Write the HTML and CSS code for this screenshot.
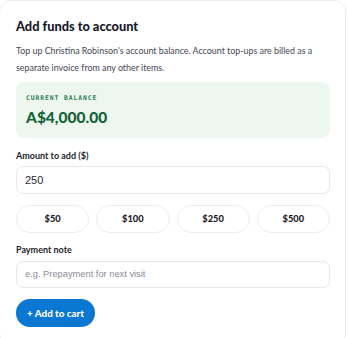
FILE: index.html
```html
<!DOCTYPE html>
<html>
<head>
<meta charset="utf-8">
<link rel="stylesheet" href="styles.css">
</head>
<body>
<div class="card">
  <h2 class="title">Add funds to account</h2>
  <p class="desc">Top up Christina Robinson's account balance. Account top-ups are billed as a separate invoice from any other items.</p>
  <div class="balance">
    <div class="balance-label">CURRENT BALANCE</div>
    <div class="balance-value">A$4,000.00</div>
  </div>
  <label class="label">Amount to add ($)</label>
  <div class="input">250</div>
  <div class="presets">
    <button class="preset">$50</button>
    <button class="preset">$100</button>
    <button class="preset">$250</button>
    <button class="preset">$500</button>
  </div>
  <label class="label label-note">Payment note</label>
  <div class="input placeholder">e.g. Prepayment for next visit</div>
  <button class="primary">+ Add to cart</button>
</div>
</body>
</html>
```

FILE: styles.css
```css
* { box-sizing: border-box; }
html, body { margin: 0; padding: 0; background: #ffffff; }
body { font-family: "Lato", "Open Sans", sans-serif; color: #1d1d2c; }
.card {
  width: 347px;
  margin-left: -1px;
  height: 345px;
  border: 1px solid #ececf2;
  border-radius: 12px;
  padding: 17px 15px 0 16px;
  display: flex;
  flex-direction: column;
}
.title {
  margin: 0;
  font-size: 12.8px;
  font-weight: 900;
  line-height: 16px;
  color: #1a1a2b;
}
.desc {
  margin: 9px 0 0;
  font-size: 8.9px;
  line-height: 16.5px;
  color: #454556;
}
.balance {
  margin-top: 6px;
  background: #edf7f0;
  border-radius: 8px;
  height: 56px;
  padding: 11px 10px 0;
}
.balance-label {
  font-family: "DejaVu Sans Mono", monospace;
  font-size: 6.4px;
  font-weight: 700;
  letter-spacing: 0.9px;
  color: #2d7d55;
  line-height: 10px;
}
.balance-value {
  margin-top: 3px;
  font-size: 15.5px;
  font-weight: 900;
  color: #17633a;
  line-height: 22px;
}
.label {
  display: block;
  margin-top: 12px;
  font-size: 9px;
  font-weight: 700;
  line-height: 12px;
  color: #1d1d2c;
}
.label-note { margin-top: 11.5px; }
.input {
  margin-top: 3.5px;
  height: 28px;
  border: 1px solid #e6e6ee;
  border-radius: 7px;
  padding: 0 8px;
  display: flex;
  align-items: center;
  font-family: "Liberation Sans", Arial, sans-serif;
  font-size: 11px;
  color: #2b2b3a;
}
.input.placeholder { color: #8a8a98; font-size: 9.3px; height: 27.5px; margin-top: 4.5px; }
.presets {
  margin-top: 11px;
  display: grid;
  grid-template-columns: repeat(4, 1fr);
  gap: 7px;
}
.preset {
  height: 28px;
  border: 1px solid #ececf2;
  border-radius: 999px;
  background: #ffffff;
  font-family: "Lato", sans-serif;
  font-size: 9.3px;
  font-weight: 900;
  color: #1d1d2c;
  padding: 0;
}
.primary {
  margin-top: 11px;
  align-self: flex-start;
  height: 28px;
  width: 79px;
  border: none;
  border-radius: 999px;
  background: #0a78d2;
  color: #ffffff;
  font-family: "Lato", sans-serif;
  font-size: 9.8px;
  font-weight: 900;
  padding: 0;
}
```
